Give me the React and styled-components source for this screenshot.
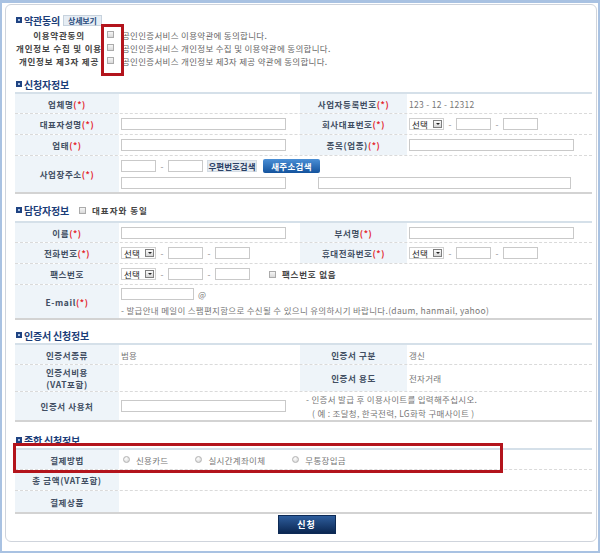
import React from 'react'
import styled, { createGlobalStyle } from 'styled-components'

const GlobalStyle = createGlobalStyle`
  html, body { margin: 0; padding: 0; background: #fff; }
  body {
    font-family: 'Noto Sans CJK KR', 'Noto Sans', sans-serif;
    font-size: 8.5px;
    color: #666;
  }
  * { box-sizing: border-box; }
`

const Frame = styled.div`
  width: 600px;
  height: 553px;
  border: 2px solid #a9c2e2;
  border-top-width: 3px;
  padding: 1px 1px 0 3px;
`

const Panel = styled.div`
  height: 538px;
  border: 1px solid #cfd4dc;
  border-radius: 6px;
  padding: 9px 4px 0 9px;
`

const Title = styled.div`
  display: flex;
  align-items: center;
  height: ${p => p.$h || 14}px;
  margin: ${p => p.$mt || 0}px 0 ${p => p.$mb || 0}px;
  font-size: 10px;
  font-weight: bold;
  color: #1b3d78;
  letter-spacing: -0.2px;
  white-space: nowrap;
`

const TitleIcon = styled.span`
  width: 6px;
  height: 6px;
  margin: 0 2px 0 1px;
  border: 2px solid #1f4382;
  background: #a9c3e6;
`

const DetailButton = styled.span`
  margin-left: 3px;
  height: 11px;
  padding: 0 4px;
  line-height: 9px;
  border: 1px solid #c7d2dd;
  background: #e6edf4;
  font-size: 8px;
  color: #2a4c7e;
`

const TitleOption = styled.span`
  display: flex;
  align-items: center;
  margin-left: 10px;
  gap: 6px;
  font-size: 8.5px;
  color: #444;
  letter-spacing: 1px;
`

const Check = styled.span`
  display: inline-block;
  flex: none;
  width: 7px;
  height: 7px;
  border: 1px solid #ababab;
  background: linear-gradient(#f6f6f6, #d9d9d9);
`

const Radio = styled.span`
  display: inline-block;
  flex: none;
  width: 7px;
  height: 7px;
  border: 1px solid #b3b3b3;
  border-radius: 50%;
  background: radial-gradient(circle at 40% 35%, #ffffff, #cfcfcf);
`

const AgreeList = styled.div`
  position: relative;
  margin-top: 2px;
`

const AgreeRow = styled.div`
  display: flex;
  align-items: center;
  height: 13px;
`

const AgreeLabel = styled.div`
  display: flex;
  justify-content: center;
  width: 88px;
  margin-right: 4px;
  font-weight: bold;
  color: #444;
  letter-spacing: 0.8px;
  white-space: nowrap;
`

const AgreeText = styled.span`
  margin-left: 8px;
  color: #666;
  letter-spacing: 0.3px;
  white-space: nowrap;
`

const Highlight = styled.div`
  position: absolute;
  left: ${p => p.$x}px;
  top: ${p => p.$y}px;
  width: ${p => p.$w}px;
  height: ${p => p.$h}px;
  border: 3px solid #b3141c;
  pointer-events: none;
`

const TableWrap = styled.div`
  position: relative;
`

const Table = styled.div`
  border-top: 2px solid #d5e0e9;
  border-bottom: 2px solid #d3d3d3;
`

const Row = styled.div`
  display: grid;
  grid-template-columns: 104px 181px 107px 1fr;
  height: ${p => p.$h || 21}px;
  border-bottom: 1px dashed #dadada;
  &:last-child { border-bottom: none; }
`

const Label = styled.div`
  display: flex;
  flex-direction: column;
  align-items: center;
  justify-content: center;
  background: #eef4f9;
  font-weight: bold;
  color: #414e62;
  letter-spacing: 0.6px;
  line-height: 12px;
  white-space: nowrap;
`

const Req = styled.span`
  color: #e3262d;
`

const Value = styled.div`
  grid-column: span ${p => p.$span || 1};
  display: flex;
  flex-direction: ${p => (p.$col ? 'column' : 'row')};
  align-items: ${p => (p.$col ? 'flex-start' : 'center')};
  justify-content: ${p => (p.$col ? 'center' : 'flex-start')};
  gap: ${p => (p.$col ? 4 : 0)}px;
  padding-left: ${p => p.$pad || 2}px;
  color: #777;
  letter-spacing: 0.3px;
  white-space: nowrap;
`

const Line = styled.div`
  display: flex;
  align-items: center;
  gap: 4px;
  padding-left: ${p => p.$indent || 0}px;
`

const Input = styled.input`
  flex: none;
  width: ${p => p.$w || 165}px;
  height: 12px;
  margin: 0 0 0 ${p => p.$ml || 0}px;
  padding: 0;
  border: 1px solid #c9c9c9;
  background: #fff;
`

const Dash = styled.span`
  width: 4px;
  text-align: center;
  color: #888;
`

const Select = styled.span`
  display: inline-flex;
  flex: none;
  align-items: center;
  justify-content: space-between;
  width: 35px;
  height: 12px;
  padding: 0 1px 0 2px;
  border: 1px solid #cfcfcf;
  background: #fff;
  color: #222;
  font-size: 8.5px;
`

const SelectArrow = styled.span`
  display: flex;
  align-items: center;
  justify-content: center;
  width: 9px;
  height: 8px;
  border: 1px solid #7f7f7f;
  background: linear-gradient(#fbfbfb, #d6d6d6);
  &::after {
    content: '';
    border-left: 2px solid transparent;
    border-right: 2px solid transparent;
    border-top: 2px solid #222;
  }
`

const ZipButton = styled.span`
  flex: none;
  width: 50px;
  height: 12px;
  line-height: 10px;
  text-align: center;
  border: 1px solid #d3dbe3;
  background: #e5ebf1;
  font-weight: bold;
  color: #2a4066;
  letter-spacing: 0;
`

const BlueButton = styled.span`
  flex: none;
  width: 57px;
  height: 14px;
  margin-left: 2px;
  line-height: 14px;
  text-align: center;
  border-radius: 2px;
  background: linear-gradient(#4a8fd6, #14539d);
  font-weight: bold;
  color: #fff;
`

const OptionGroup = styled.span`
  display: flex;
  align-items: center;
  gap: 6px;
  margin: 0 25px 0 2px;
  color: #777;
`

const CheckOption = styled.span`
  display: flex;
  align-items: center;
  gap: 6px;
  margin-left: 19px;
  font-weight: bold;
  color: #444;
  letter-spacing: 0.8px;
`

const Footer = styled.div`
  display: flex;
  justify-content: center;
  padding-left: 6px;
  margin-top: 1px;
`

const Submit = styled.button`
  width: 58px;
  height: 19px;
  border: 1px solid #0d2a55;
  background: linear-gradient(#2e5d9c, #0b2752);
  color: #fff;
  font-family: inherit;
  font-size: 9px;
  font-weight: bold;
  letter-spacing: 1px;
`

const R = () => <Req>(*)</Req>

const Phone = () => (
  <>
    <Select>선택<SelectArrow /></Select>
    <Line style={{ paddingLeft: 4 }}>
      <Dash>-</Dash>
      <Input $w={35} />
      <Dash>-</Dash>
      <Input $w={35} />
    </Line>
  </>
)

const agreements = [
  ['이용약관동의', '공인인증서비스 이용약관에 동의합니다.'],
  ['개인정보 수집 및 이용', '공인인증서비스 개인정보 수집 및 이용약관에 동의합니다.'],
  ['개인정보 제3자 제공', '공인인증서비스 개인정보 제3자 제공 약관에 동의합니다.'],
]

export default function App() {
  return (
    <>
      <GlobalStyle />
      <Frame>
        <Panel>
          <Title $h={12}>
            <TitleIcon />약관동의
            <DetailButton>상세보기</DetailButton>
          </Title>
          <AgreeList>
            {agreements.map(([label, text]) => (
              <AgreeRow key={label}>
                <AgreeLabel>{label}</AgreeLabel>
                <Check />
                <AgreeText>{text}</AgreeText>
              </AgreeRow>
            ))}
            <Highlight $x={86} $y={-4} $w={23} $h={52} />
          </AgreeList>

          <Title $mt={10} $mb={1}><TitleIcon />신청자정보</Title>
          <Table>
            <Row $h={20}>
              <Label><span>업체명<R /></span></Label>
              <Value />
              <Label><span>사업자등록번호<R /></span></Label>
              <Value>123 - 12 - 12312</Value>
            </Row>
            <Row>
              <Label><span>대표자성명<R /></span></Label>
              <Value><Input /></Value>
              <Label><span>회사대표번호<R /></span></Label>
              <Value><Phone /></Value>
            </Row>
            <Row>
              <Label><span>업태<R /></span></Label>
              <Value><Input /></Value>
              <Label><span>종목(업종)<R /></span></Label>
              <Value><Input /></Value>
            </Row>
            <Row $h={36}>
              <Label><span>사업장주소<R /></span></Label>
              <Value $col $span={3}>
                <Line>
                  <Input $w={35} />
                  <Dash>-</Dash>
                  <Input $w={35} />
                  <ZipButton>우편번호검색</ZipButton>
                  <BlueButton>새주소검색</BlueButton>
                </Line>
                <Line>
                  <Input />
                  <Input $w={253} $ml={28} />
                </Line>
              </Value>
            </Row>
          </Table>

          <Title $mt={9} $mb={4}>
            <TitleIcon />담당자정보
            <TitleOption><Check />대표자와 동일</TitleOption>
          </Title>
          <Table>
            <Row $h={20}>
              <Label><span>이름<R /></span></Label>
              <Value><Input /></Value>
              <Label><span>부서명<R /></span></Label>
              <Value><Input /></Value>
            </Row>
            <Row>
              <Label><span>전화번호<R /></span></Label>
              <Value><Phone /></Value>
              <Label><span>휴대전화번호<R /></span></Label>
              <Value><Phone /></Value>
            </Row>
            <Row>
              <Label>팩스번호</Label>
              <Value $span={3}>
                <Phone />
                <CheckOption><Check />팩스번호 없음</CheckOption>
              </Value>
            </Row>
            <Row $h={33}>
              <Label><span>E-mail<R /></span></Label>
              <Value $col $span={3}>
                <Line><Input $w={73} />@</Line>
                <span>- 발급안내 메일이 스팸편지함으로 수신될 수 있으니 유의하시기 바랍니다.(daum, hanmail, yahoo)</span>
              </Value>
            </Row>
          </Table>

          <Title $mt={8} $mb={1}><TitleIcon />인증서 신청정보</Title>
          <Table>
            <Row $h={20}>
              <Label>인증서종류</Label>
              <Value>범용</Value>
              <Label>인증서 구분</Label>
              <Value>갱신</Value>
            </Row>
            <Row $h={27}>
              <Label><span>인증서비용</span><span>(VAT포함)</span></Label>
              <Value />
              <Label>인증서 용도</Label>
              <Value>전자거래</Value>
            </Row>
            <Row $h={28}>
              <Label>인증서 사용처</Label>
              <Value><Input /></Value>
              <Value $col $span={2} $pad={6} style={{ gap: 2 }}>
                <Line>- 인증서 발급 후 이용사이트를 입력해주십시오.</Line>
                <Line $indent={6}>( 예 : 조달청, 한국전력, LG화학 구매사이트 )</Line>
              </Value>
            </Row>
          </Table>

          <Title $mt={11} $mb={1}><TitleIcon />종합 신청정보</Title>
          <TableWrap>
            <Table>
              <Row $h={20}>
                <Label>결제방법</Label>
                <Value $span={3}>
                  <OptionGroup><Radio />신용카드</OptionGroup>
                  <OptionGroup><Radio />실시간계좌이체</OptionGroup>
                  <OptionGroup><Radio />무통장입금</OptionGroup>
                </Value>
              </Row>
              <Row>
                <Label>총 금액(VAT포함)</Label>
                <Value $span={3} />
              </Row>
              <Row>
                <Label>결제상품</Label>
                <Value $span={3} />
              </Row>
            </Table>
            <Highlight $x={-2} $y={-5} $w={490} $h={30} />
          </TableWrap>

          <Footer>
            <Submit>신청</Submit>
          </Footer>
        </Panel>
      </Frame>
    </>
  )
}
